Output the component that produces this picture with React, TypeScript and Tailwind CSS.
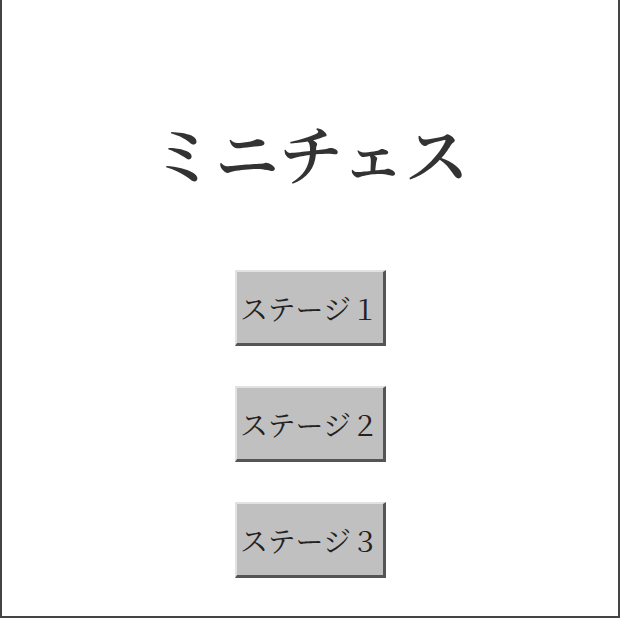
import React from 'react';

const stages = ['ステージ１', 'ステージ２', 'ステージ３'];

const App: React.FC = () => {
  return (
    <div
      className="h-[618px] w-[620px] border-x-2 border-b-2 border-[#444] bg-white flex flex-col items-center"
      style={{ fontFamily: '"Noto Serif CJK JP", "Noto Serif JP", "Liberation Serif", "Noto Sans CJK JP", serif' }}
    >
      <h1 className="mt-[119px] text-[64px] leading-[64px] font-semibold text-[#333]">ミニチェス</h1>

      <div className="mt-[87px] flex flex-col items-center gap-[40px]">
        {stages.map((s) => (
          <button
            key={s}
            className="w-[151px] h-[76px] bg-[#c0c0c0] border-t-2 border-l-2 border-r-[3px] border-b-[3px] border-t-[#e2e2e2] border-l-[#e2e2e2] border-r-[#555] border-b-[#555] text-[28px] text-[#222] flex items-center justify-center"
          >
            {s}
          </button>
        ))}
      </div>
    </div>
  );
};

export default App;
